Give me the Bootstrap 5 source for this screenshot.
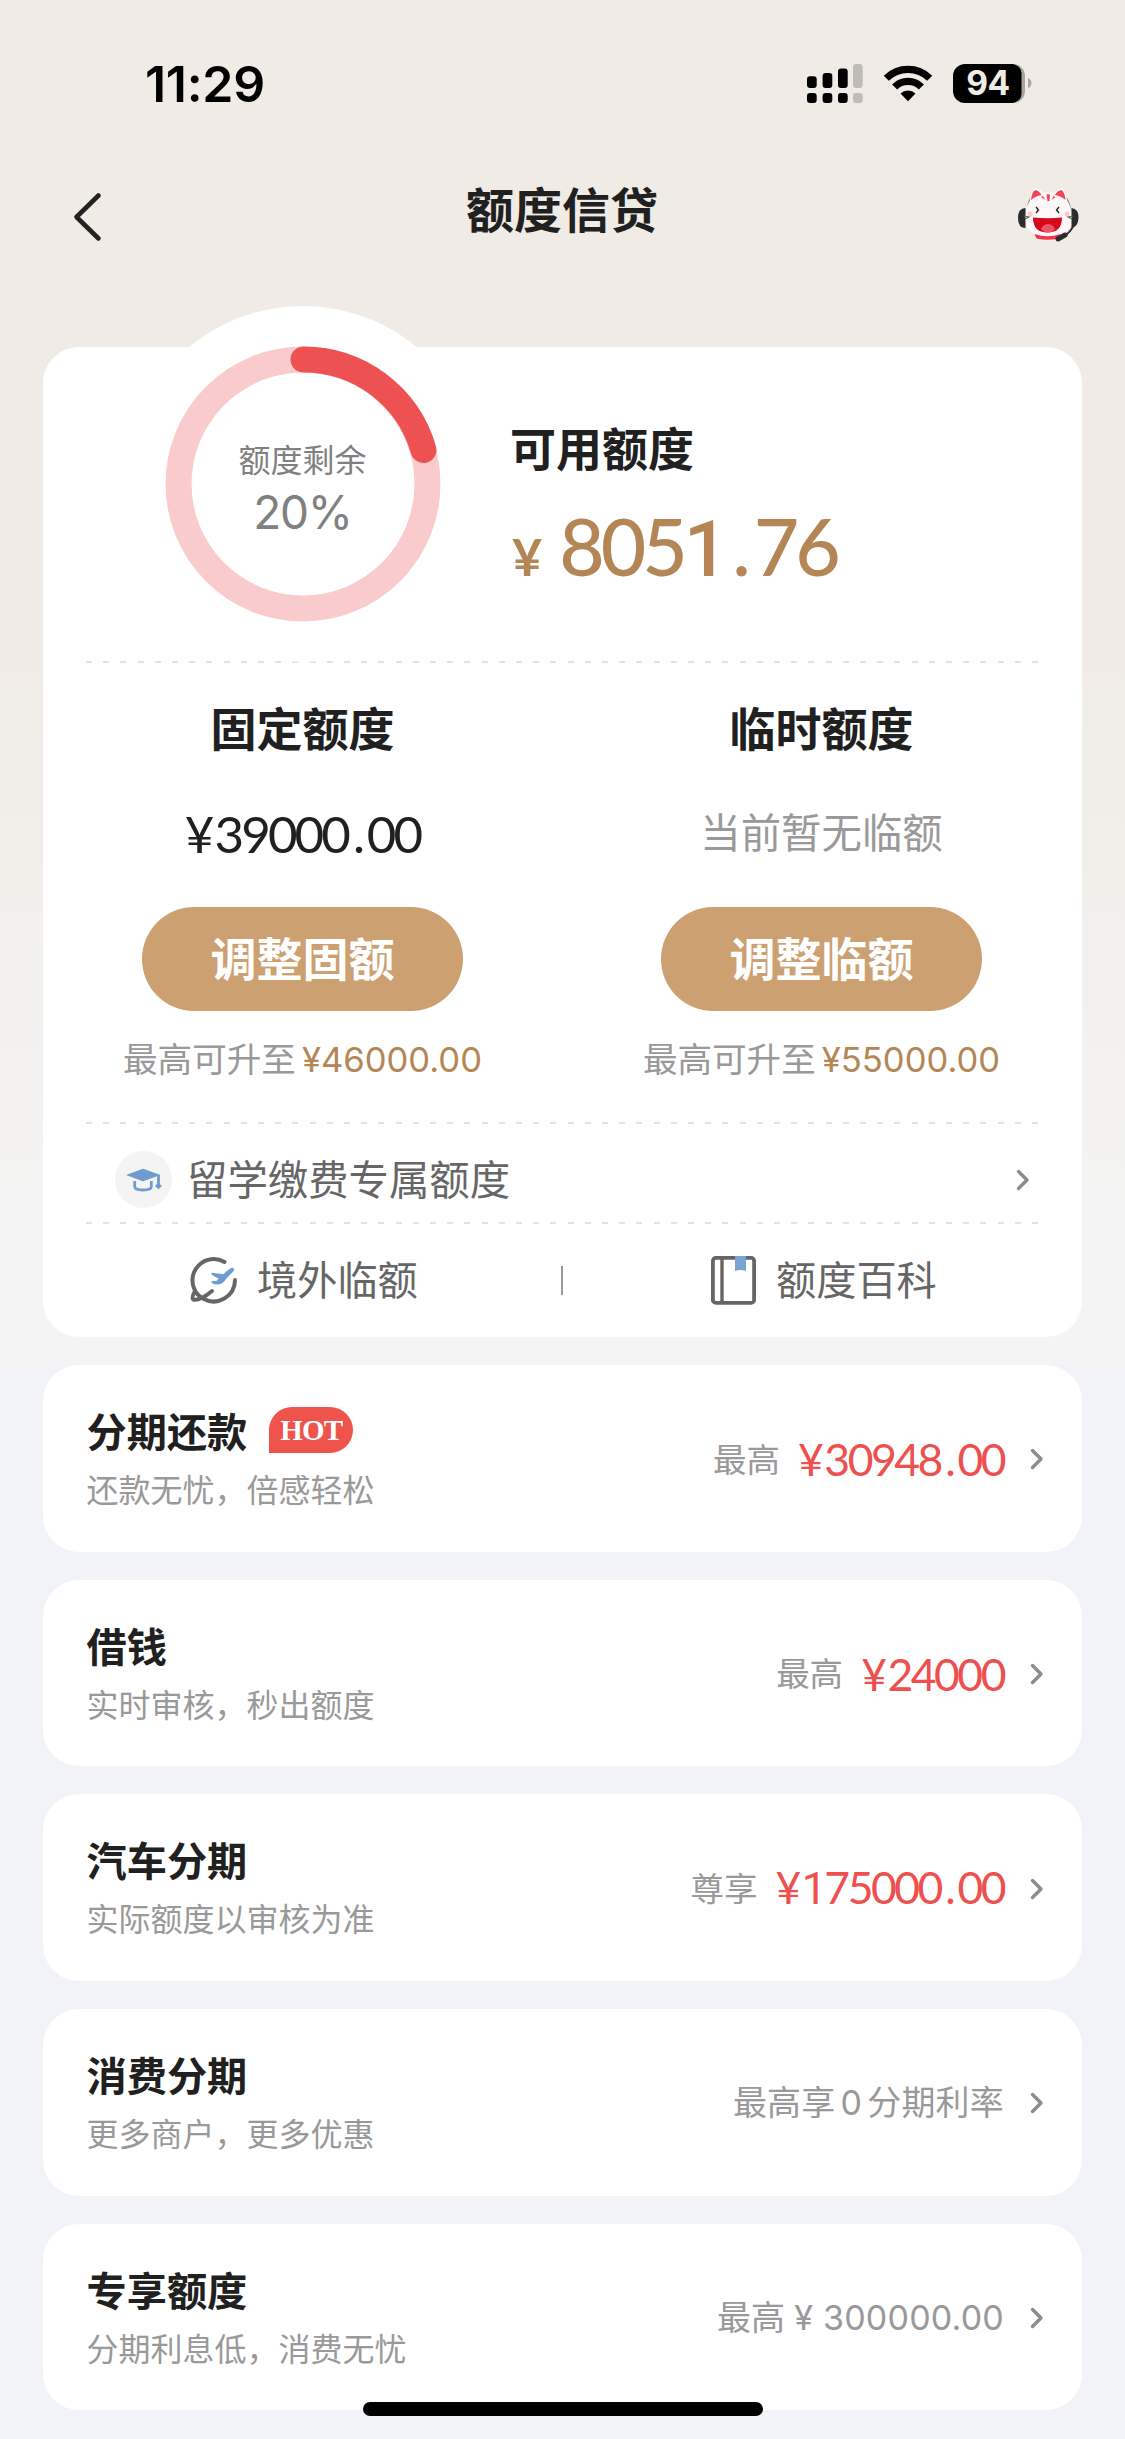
<!DOCTYPE html>
<html lang="zh-CN">
<head>
<meta charset="utf-8">
<meta name="viewport" content="width=device-width, initial-scale=1">
<title>额度信贷</title>
<link href="https://cdn.jsdelivr.net/npm/bootstrap@5.3.0/dist/css/bootstrap.min.css" rel="stylesheet">
<style>
  body { background: #f2f3f8; color: #202020; font-family: Inter, "Noto Sans CJK SC", sans-serif; line-height: 1; }
  .cjk { font-family: "Noto Sans CJK SC", sans-serif; }
  .screen { width: 1125px; height: 2439px; overflow: hidden; position: relative; }
  .hero { height: 1365px; background: linear-gradient(#f0ebe4 0, #f0ebe4 600px, #f4f4f4 1240px, #f4f4f4); }
  .statusbar { height: 130px; padding: 38px 93px 0 145px; }
  .clock { font-size: 50px; font-weight: 600; letter-spacing: -.3px; line-height: 92px; }
  .topbar { height: 217px; padding: 0 46px 0 70px; }
  .topbar-title { font-size: 48px; font-weight: 700; line-height: 60px; margin-top: 47px; }
  .panel { background: #fff; border: 0; border-radius: 36px; width: 1039px; margin: 0 43px; }
  .quota { height: 990px; }
  .summary { height: 314px; padding-left: 122.5px; gap: 70.5px; }
  .ring { width: 274px; height: 274px; color: #808080; }
  .ring svg { overflow: visible; }
  .ring-text { inset: 0; }
  .heading { font-size: 46px; font-weight: 700; line-height: 60px; }
  .tan { color: #b48655; }
  .num { font-family: Lato, sans-serif; }
  .num .one { font-family: Roboto, sans-serif; }
  .avail { margin-top: 69px; }
  .avail-amount { font-size: 78.5px; line-height: 90px; letter-spacing: -4px; font-weight: 500; margin-top: 25px; }
  .avail-amount .yen { font-size: 52px; margin-right: 21px; margin-left: 2px; font-weight: 700; }
  .pt { margin: 0 .09em 0 .1em; }
  .dashes { height: 2px; margin: 0 44px 0 43px; background: repeating-linear-gradient(90deg, #e2e2e2 0 6px, transparent 6px 17.2px); }
  .split { height: 459px; padding-top: 33px; padding-right: 1px; }
  .split-value { height: 60px; margin-top: 45px; font-size: 40.4px; line-height: 60px; color: #999; }
  .split-value.num { font-size: 51px; letter-spacing: -2.9px; line-height: 66px; color: #202020; }
  .yen-gap { margin-right: 3px; }
  .btn-adjust { width: 321px; height: 104px; margin-top: 46px; padding-top: 3px; background: #cca070; color: #fff; font-size: 46px; font-weight: 700; line-height: 1; }
  .cap-line { height: 50px; margin-top: 21px; font-size: 34.6px; line-height: 50px; color: #999; }
  .cap-line .tan { margin-left: 6px; }
  .abroad { height: 98px; padding: 13px 52px 0 72px; font-size: 40.4px; color: #666; }
  .links { height: 113px; font-size: 40.2px; color: #666; }
  .links .bar { width: 2px; height: 29px; background: #999; }
  .links .cjk { margin-top: -5px; }
  .offers { gap: 28.1px; }
  .offer { height: 186.6px; padding: 0 38px 0 43.5px; }
  .offer-title { font-size: 40.2px; font-weight: 700; line-height: 50px; }
  .offer-sub { font-size: 32px; line-height: 46px; margin-top: 10px; color: #999; }
  .offer-left { padding-top: 40px; height: 100%; }
  .hot { width: 84px; height: 46px; border-radius: 23px 23px 23px 0; background: #ee534c; color: #fff; font: 700 29px/46px "Liberation Serif", serif; letter-spacing: -.8px; margin-left: 22px; }
  .offer-note { font-size: 33.5px; color: #999; margin-top: -2px; }
  .money { font-size: 44.5px; color: #ee5050; letter-spacing: -2.5px; margin-left: 18px; padding-top: 2px; }
  .plain { font-size: 34px; letter-spacing: .2px; color: #999; }
  .chev { margin-left: 26px; margin-top: 2px; }
  .home-bar { width: 400px; height: 14px; border-radius: 7px; background: #000; left: 363px; top: 2402px; }
</style>
</head>
<body>
<div class="screen">
  <div class="hero">
    <header class="statusbar d-flex justify-content-between">
      <div class="clock text-black">11:29</div>
      <svg width="225" height="40" viewBox="807 64 225 40" style="margin-top:26px">
        <g fill="#000">
          <rect x="807" y="76.300" width="9.700" height="11.700" rx="3"/><rect x="822.600" y="73" width="9.700" height="15" rx="3"/><rect x="838" y="68.600" width="9.700" height="19.400" rx="3"/>
          <rect x="807" y="93" width="9.700" height="10" rx="3"/><rect x="822.600" y="93" width="9.700" height="10" rx="3"/><rect x="838" y="93" width="9.700" height="10" rx="3"/>
        </g>
        <g fill="#bfbbb6"><rect x="853" y="64" width="9.700" height="24" rx="3"/><rect x="853" y="93" width="9.700" height="10" rx="3"/></g>
        <g fill="none" stroke="#000" stroke-width="7.200">
          <path d="M886.300 78.300a31 31 0 0 1 43.400 0"/><path d="M894.600 87a19 19 0 0 1 26.800 0"/>
        </g>
        <path d="M900.500 93.500a11 11 0 0 1 15 0L908 101.300z"/>
        <path d="M1013 64a12 12 0 0 1 12 12v15a12 12 0 0 1-12 12z" fill="#a8a49f"/>
        <path d="M965 64h48q8 2 8.500 9v21q-.5 7-8.500 9h-48a12 12 0 0 1-12-12V76a12 12 0 0 1 12-12z"/>
        <path d="M1028 78q3.500 1.500 3.500 5t-3.500 5z" fill="#a8a49f"/>
        <text x="988" y="95.300" text-anchor="middle" font-family="Inter" font-weight="700" font-size="33.500" letter-spacing="-.5" fill="#f0ebe4">94</text>
      </svg>
    </header>
    <nav class="topbar d-flex justify-content-between align-items-start">
      <svg width="36" height="52" viewBox="0 0 36 52" fill="none" stroke="#222" stroke-width="4.600" stroke-linecap="round" stroke-linejoin="round" style="margin-top:60px"><path d="M28.500 5.500L6.500 27l22 21.500"/></svg>
      <h1 class="topbar-title cjk mb-0">额度信贷</h1>
      <svg width="61" height="56" viewBox="0 0 61 56" style="margin-top:57px">
        <path d="M9 24Q10 10 18 6M53 24Q51 10 43 6" fill="none" stroke="#777" stroke-width="1"/>
        <path d="M12 18Q12 4 17 1q4 0 9 6h9q5-6 9-6 5 3 5 17z" fill="#fff"/>
        <path d="M30.500 5C45 5 54 16 54 31c0 12-9 19-23.500 19S7 43 7 31C7 16 16 5 30.500 5z" fill="#fdf8f7"/>
        <path d="M13 13Q14 4 17.500 3q4 1 6 5-6 1-10.500 5zM47.500 13Q46.500 4 43 3q-4 1-6 5 6 1 10.500 5z" fill="#f4425c"/>
        <path d="M28.500 7.500h3.500l-.5 6.500h-2zM23 10l2-1 2 4zM37.500 10l-2-1-2 4z" fill="#f0405a"/>
        <path d="M18 20l2.500 3-2.500 3M41 20l-2.500 3 2.500 3" fill="none" stroke="#222" stroke-width="1.400"/>
        <circle cx="12" cy="27" r="2.500" fill="#fbc9cf"/><circle cx="49" cy="27" r="2.500" fill="#fbc9cf"/>
        <path d="M15 30.500q14.500 1.500 29 0 0 15-14.500 15T15 30.500z" fill="#d50a1c"/>
        <path d="M23 42q2.500-5 7-5t7 5q-3 3.500-7 3.500T23 42z" fill="#ee5268"/>
        <path d="M16.500 47q13 4.500 26 0l-2 4.500q-11 2.500-22 0z" fill="#f0364f"/>
        <path d="M7.500 21Q0 21 0 31t7.500 10z" fill="#2c2c2e"/><path d="M53.500 21Q61 22 60.500 31T53.500 41z" fill="#2c2c2e"/>
        <path d="M6 29l5 1-4 2M55 29l-5 1 4 2" fill="none" stroke="#666" stroke-width="1.200"/>
        <path d="M55 40q-3 5-8 9" fill="none" stroke="#2c2c2e" stroke-width="1.800"/>
        <path d="M47 48l-7 4" stroke="#2c2c2e" stroke-width="5" stroke-linecap="round"/>
      </svg>
    </nav>

    <section class="panel quota">
      <div class="summary d-flex">
        <div class="ring position-relative">
          <svg width="274" height="274" viewBox="0 0 274 274" fill="none">
            <circle cx="137" cy="137" r="178" fill="#fff"/>
            <circle cx="137" cy="137" r="124.500" stroke="#f9cbcc" stroke-width="26"/>
            <path d="M137.500 12.500A124.500 124.500 0 0 1 257.500 103" stroke="#ee5152" stroke-width="26" stroke-linecap="round"/>
          </svg>
          <div class="ring-text position-absolute d-flex flex-column align-items-center">
            <div class="cjk" style="font-size:32px;line-height:44px;margin-top:89px">额度剩余</div>
            <div style="font-size:46px;line-height:56px;margin-top:4px;letter-spacing:-1.300px">20%</div>
          </div>
        </div>
        <div class="avail">
          <div class="heading cjk">可用额度</div>
          <div class="avail-amount num tan text-nowrap"><span class="yen">¥</span>805<span class="one">1</span><span class="pt">.</span>76</div>
        </div>
      </div>
      <div class="dashes"></div>
      <div class="row g-0 split text-center">
        <div class="col-6">
          <div class="heading cjk">固定额度</div>
          <div class="split-value num"><span class="yen-gap">¥</span>39000<span class="pt">.</span>00</div>
          <button type="button" class="btn btn-adjust rounded-pill border-0 cjk pt-0">调整固额</button>
          <div class="cap-line"><span class="cjk">最高可升至</span><span class="tan">¥46000.00</span></div>
        </div>
        <div class="col-6">
          <div class="heading cjk">临时额度</div>
          <div class="split-value cjk">当前暂无临额</div>
          <button type="button" class="btn btn-adjust rounded-pill border-0 cjk pt-0">调整临额</button>
          <div class="cap-line"><span class="cjk">最高可升至</span><span class="tan">¥55000.00</span></div>
        </div>
      </div>
      <div class="dashes"></div>
      <div class="abroad d-flex align-items-center">
        <svg width="57" height="57" viewBox="0 0 57 57">
          <circle cx="28.500" cy="28.500" r="28.500" fill="#f4f4f4"/>
          <g fill="#6e9ccf"><path d="M11 24l16-6q1-.4 2 0l16.500 6L29 30q-1 .4-2 0z"/><path d="M43.500 31.800l3.400 3.200-3.400 3.200L40 35z"/></g>
          <path d="M19.700 30v5.500q0 3.500 8.300 3.500t8.300-3.500V30M43.500 24v9" fill="none" stroke="#6e9ccf" stroke-width="2.800"/>
        </svg>
        <span class="cjk" style="margin:-3px 0 0 15px">留学缴费专属额度</span>
        <svg class="ms-auto" width="14" height="22" viewBox="0 0 14 22" fill="none" stroke="#8c8c8c" stroke-width="3.400" stroke-linecap="round" stroke-linejoin="round"><path d="M2.500 2.500l8.500 8.500-8.500 8.500"/></svg>
      </div>
      <div class="dashes"></div>
      <div class="links d-flex align-items-center">
        <div class="d-flex align-items-center flex-grow-1" style="flex-basis:0;padding-left:147px">
          <svg width="48" height="50" viewBox="0 0 48 50" fill="none" stroke="#666" stroke-width="4" stroke-linecap="round">
            <path d="M34.500 6A21.300 21.300 0 0 0 5 34.500M45 24A21.300 21.300 0 0 1 13 42.500"/><path d="M5 35Q1 42 3.500 43.700 10 45 22 35M5 35q3 5 8.500 7.500"/>
            <path d="M42 12.500Q37 15 34 19L22 17.500q0 1.500 8 4.500l-3 3.500-5 .5q2 2 7 1.500 4-1 6-4.500l7.500-8q2-2-.5-2.500z" fill="#6e9ccf" stroke="#6e9ccf" stroke-width="1.600" stroke-linejoin="round"/>
          </svg>
          <span class="cjk" style="margin-left:19px">境外临额</span>
        </div>
        <div class="bar"></div>
        <div class="d-flex align-items-center flex-grow-1" style="flex-basis:0;padding-left:148px">
          <svg width="45" height="49" viewBox="0 0 45 49" fill="none" stroke="#666" stroke-width="3.800">
            <rect x="1.900" y="1.900" width="41.200" height="45" rx="3"/><path d="M11 2v45" stroke-width="3.400"/><path d="M24 0h11v15q-5.500-2-11 0z" fill="#7ba3cf" stroke="none"/>
          </svg>
          <span class="cjk" style="margin-left:20px">额度百科</span>
        </div>
      </div>
    </section>
  </div>

  <main class="offers d-flex flex-column">
    <section class="panel offer d-flex align-items-center">
      <div class="offer-left me-auto">
        <div class="offer-title cjk d-flex align-items-center">分期还款<span class="hot text-center">HOT</span></div>
        <div class="offer-sub cjk">还款无忧，倍感轻松</div>
      </div>
      <span class="offer-note cjk">最高</span><span class="money num"><span class="yen-gap">¥</span>30948<span class="pt">.</span>00</span>
      <svg class="chev" width="14" height="22" viewBox="0 0 14 22" fill="none" stroke="#8c8c8c" stroke-width="3.400" stroke-linecap="round" stroke-linejoin="round"><path d="M2.500 2.500l8.500 8.500-8.500 8.500"/></svg>
    </section>
    <section class="panel offer d-flex align-items-center">
      <div class="offer-left me-auto">
        <div class="offer-title cjk">借钱</div>
        <div class="offer-sub cjk">实时审核，秒出额度</div>
      </div>
      <span class="offer-note cjk">最高</span><span class="money num"><span class="yen-gap">¥</span>24000</span>
      <svg class="chev" width="14" height="22" viewBox="0 0 14 22" fill="none" stroke="#8c8c8c" stroke-width="3.400" stroke-linecap="round" stroke-linejoin="round"><path d="M2.500 2.500l8.500 8.500-8.500 8.500"/></svg>
    </section>
    <section class="panel offer d-flex align-items-center">
      <div class="offer-left me-auto">
        <div class="offer-title cjk">汽车分期</div>
        <div class="offer-sub cjk">实际额度以审核为准</div>
      </div>
      <span class="offer-note cjk">尊享</span><span class="money num"><span class="yen-gap">¥</span><span class="one">1</span>75000<span class="pt">.</span>00</span>
      <svg class="chev" width="14" height="22" viewBox="0 0 14 22" fill="none" stroke="#8c8c8c" stroke-width="3.400" stroke-linecap="round" stroke-linejoin="round"><path d="M2.500 2.500l8.500 8.500-8.500 8.500"/></svg>
    </section>
    <section class="panel offer d-flex align-items-center">
      <div class="offer-left me-auto">
        <div class="offer-title cjk">消费分期</div>
        <div class="offer-sub cjk">更多商户，更多优惠</div>
      </div>
      <span class="plain"><span class="cjk">最高享</span><span style="margin:0 5px">0</span><span class="cjk">分期利率</span></span>
      <svg class="chev" width="14" height="22" viewBox="0 0 14 22" fill="none" stroke="#8c8c8c" stroke-width="3.400" stroke-linecap="round" stroke-linejoin="round"><path d="M2.500 2.500l8.500 8.500-8.500 8.500"/></svg>
    </section>
    <section class="panel offer d-flex align-items-center">
      <div class="offer-left me-auto">
        <div class="offer-title cjk">专享额度</div>
        <div class="offer-sub cjk">分期利息低，消费无忧</div>
      </div>
      <span class="plain"><span class="cjk">最高</span><span style="margin-left:9px">¥ 300000.00</span></span>
      <svg class="chev" width="14" height="22" viewBox="0 0 14 22" fill="none" stroke="#8c8c8c" stroke-width="3.400" stroke-linecap="round" stroke-linejoin="round"><path d="M2.500 2.500l8.500 8.500-8.500 8.500"/></svg>
    </section>
  </main>
  <div class="home-bar position-absolute"></div>
</div>
<script src="https://cdn.jsdelivr.net/npm/bootstrap@5.3.0/dist/js/bootstrap.bundle.min.js"></script>
</body>
</html>
